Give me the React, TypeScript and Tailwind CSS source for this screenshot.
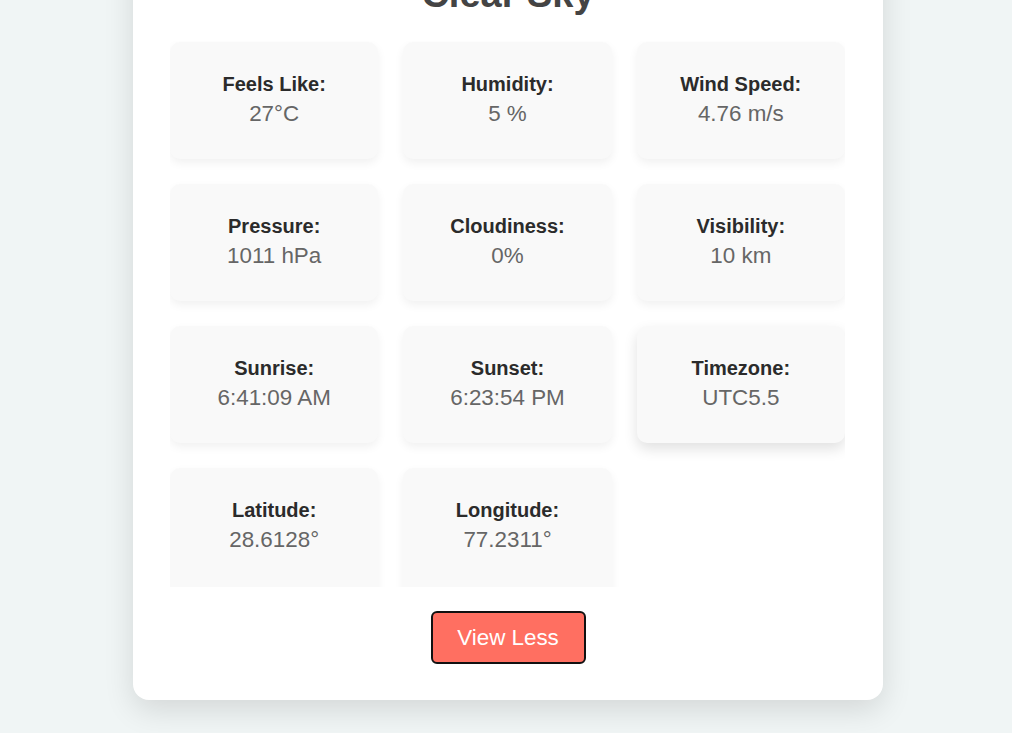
const details = [
  { label: 'Feels Like:', value: '27°C' },
  { label: 'Humidity:', value: '5 %' },
  { label: 'Wind Speed:', value: '4.76 m/s' },
  { label: 'Pressure:', value: '1011 hPa' },
  { label: 'Cloudiness:', value: '0%' },
  { label: 'Visibility:', value: '10 km' },
  { label: 'Sunrise:', value: '6:41:09 AM' },
  { label: 'Sunset:', value: '6:23:54 PM' },
  { label: 'Timezone:', value: 'UTC5.5', hovered: true },
  { label: 'Latitude:', value: '28.6128°' },
  { label: 'Longitude:', value: '77.2311°' },
];

function DetailCard({ label, value, hovered, last }: { label: string; value: string; hovered?: boolean; last?: boolean }) {
  return (
    <div
      className={
        'flex flex-col items-center rounded-[10px] bg-[#f9f9f9] pt-[31px] ' +
        (last ? 'h-[130px] ' : 'h-[117px] ') +
        (hovered ? 'shadow-[0_6px_14px_rgba(0,0,0,0.12)]' : 'shadow-[0_4px_10px_rgba(0,0,0,0.06)]')
      }
    >
      <p className="mb-[5px] text-[20px] leading-[23px] font-bold text-[#2b2b2b]">{label}</p>
      <p className="text-[22.4px] leading-[26px] text-[#666]">{value}</p>
    </div>
  );
}

export default function App() {
  return (
    <div className="flex h-[733px] justify-center overflow-hidden bg-[#f0f5f5] pl-[4px] font-['Liberation_Sans',Arial,sans-serif]">
      <div className="mt-[-100px] flex h-[800px] w-[750px] flex-col items-center rounded-2xl bg-white pt-[72px] shadow-[0_10px_30px_rgba(0,0,0,0.12)]">
        <h1 className="text-[38px] leading-[44px] font-bold text-[#444]">Clear Sky</h1>
        <div className="mt-[25px] ml-[37px] h-[546px] w-[675px] self-start overflow-hidden pt-[1px]">
          <div className="grid grid-cols-3 gap-x-[25px] gap-y-[25px]">
            {details.map((d, i) => (
              <DetailCard key={d.label} label={d.label} value={d.value} hovered={d.hovered} last={i >= 9} />
            ))}
          </div>
        </div>
        <button className="mt-[24px] h-[53px] w-[155px] rounded-[6px] border-2 border-[#111] bg-[#ff6f61] text-[22.4px] text-white">
          View Less
        </button>
      </div>
    </div>
  );
}
